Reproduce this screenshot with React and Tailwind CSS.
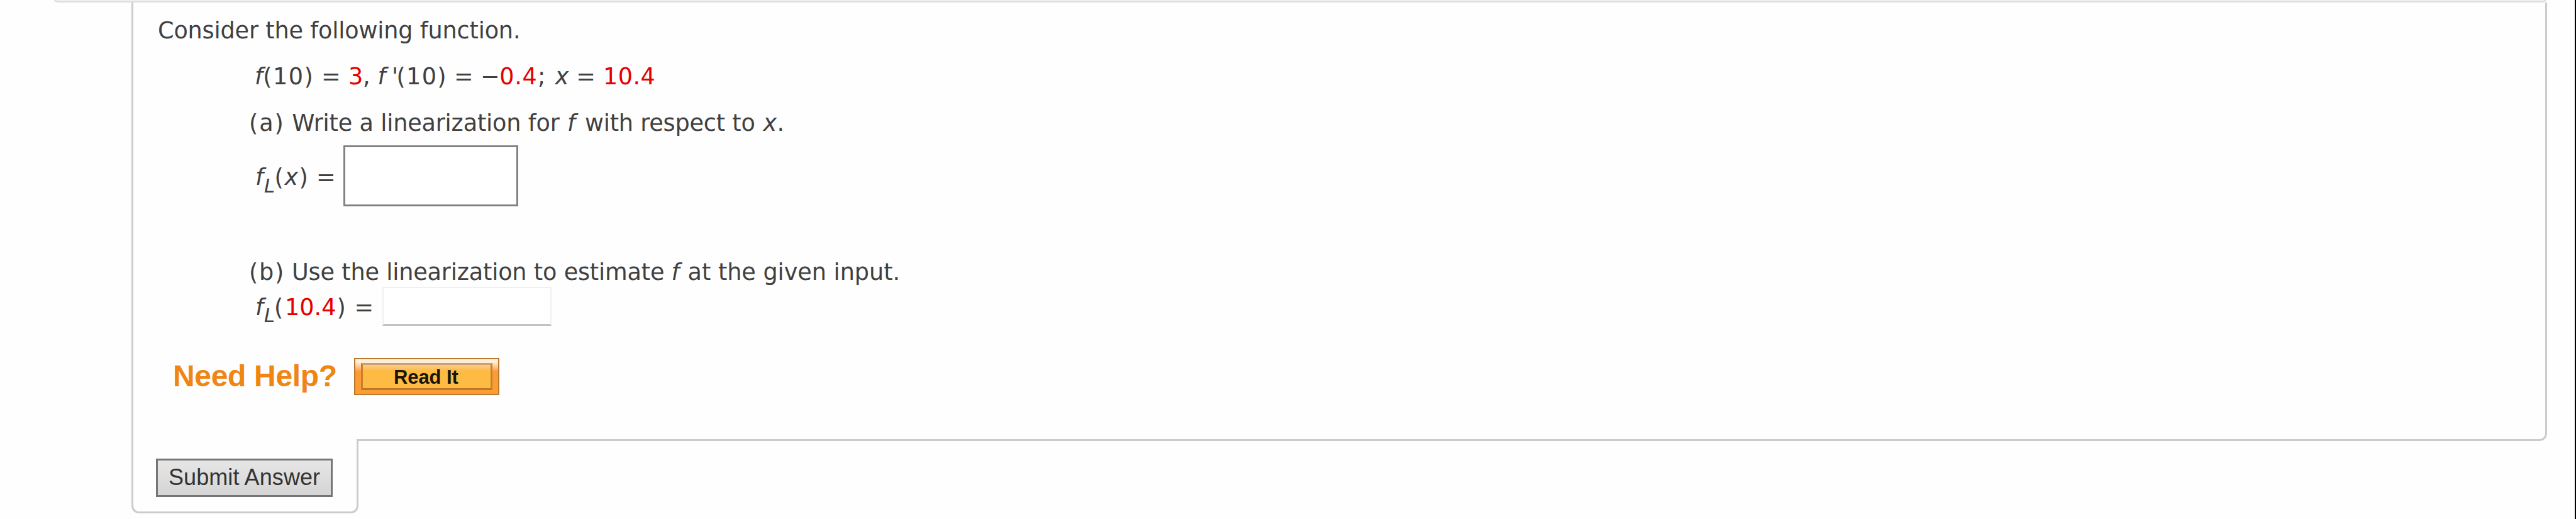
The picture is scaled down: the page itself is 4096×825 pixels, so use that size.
const Seg = ({ className = "", children }) => (
  <span className={`block shrink-0 whitespace-pre ${className}`}>{children}</span>
);

export default function App() {
  return (
    <div className="flex h-[825px] w-full flex-col overflow-hidden border-r-2 border-black bg-[#fefefe] font-['DejaVu_Sans',Verdana,sans-serif] text-[36.6px] leading-[49px] text-[#404040]">
      <div className="ml-[85px] flex h-1 w-[3965px] shrink-0 items-end overflow-hidden">
        <div className="h-5 w-full shrink-0 rounded-b-[7px] border-[3px] border-[#dfdfdf] bg-[#f5f5f5]" />
      </div>

      <main className="ml-[209px] h-[697px] w-[3841px] shrink-0 rounded-br-[12px] border-x-[3px] border-b-[3px] border-[#cccccc]">
        <p className="ml-[39px] mt-5 h-[49px] tracking-[-0.16px]">Consider the following function.</p>

        <div className="ml-[193px] mt-6 flex h-[49px]">
          <Seg className="w-[13.3px] italic">f</Seg>
          <Seg className="w-[92.7px] tracking-[1.5px]">(10)</Seg>
          <Seg className="w-[43px]">=</Seg>
          <Seg className="w-[23px] text-[#e60000]">3</Seg>
          <Seg className="w-[23.5px]">,</Seg>
          <Seg className="w-[22.5px] italic">f</Seg>
          <Seg className="w-[7.5px] italic">'</Seg>
          <Seg className="w-[91.5px] tracking-[1.3px]">(10)</Seg>
          <Seg className="w-[42px]">=</Seg>
          <Seg className="w-[30.3px]">−</Seg>
          <Seg className="w-[60.7px] tracking-[0.6px] text-[#e60000]">0.4</Seg>
          <Seg className="w-[27.8px]">;</Seg>
          <Seg className="w-[33.6px] italic">x</Seg>
          <Seg className="w-[42.6px]">=</Seg>
          <Seg className="tracking-[0.45px] text-[#e60000]">10.4</Seg>
        </div>

        <div className="ml-[184px] mt-[25px] flex h-[49px]">
          <Seg className="w-[68.3px] tracking-[1.9px]">(a)</Seg>
          <Seg className="w-[437.7px] tracking-[-0.17px]">Write a linearization for</Seg>
          <Seg className="w-[28px] italic">f</Seg>
          <Seg className="w-[283.4px] tracking-[-0.19px]">with respect to</Seg>
          <Seg className="w-[22.1px] italic">x</Seg>
          <Seg>.</Seg>
        </div>

        <div className="ml-[194px] mt-[11px] flex h-[97px] items-start">
          <div className="flex w-[140px] shrink-0 pt-[26px]">
            <Seg className="w-[14px] italic">f</Seg>
            <Seg className="w-[16.6px] pt-[14px] text-[30.5px] italic">L</Seg>
            <Seg className="w-[16px]">(</Seg>
            <Seg className="w-[22.9px] italic">x</Seg>
            <Seg className="w-[27.5px]">)</Seg>
            <Seg>=</Seg>
          </div>
          <div className="h-[97px] w-[278px] shrink-0 border-[3px] border-[#828282] bg-white" />
        </div>

        <div className="ml-[184px] mt-20 flex h-12">
          <Seg className="w-[68px] tracking-[1.7px]">(b)</Seg>
          <Seg className="w-[603.5px] tracking-[-0.17px]">Use the linearization to estimate</Seg>
          <Seg className="w-[26.1px] italic">f</Seg>
          <Seg className="tracking-[-0.03px]">at the given input.</Seg>
        </div>

        <div className="ml-[194px] flex h-[62px] items-start">
          <div className="flex w-[202px] shrink-0 pt-2">
            <Seg className="w-[14px] italic">f</Seg>
            <Seg className="w-[16px] pt-[13px] text-[30.5px] italic">L</Seg>
            <Seg className="w-[17px]">(</Seg>
            <Seg className="w-[82.6px] text-[#e60000]">10.4</Seg>
            <Seg className="w-[27.9px]">)</Seg>
            <Seg>=</Seg>
          </div>
          <div className="h-[62px] w-[269px] shrink-0 border-x-2 border-t-2 border-b-[3px] border-x-[#f0f0f0] border-t-[#f0f0f0] border-b-[#c2c2c2] bg-white" />
        </div>

        <div className="ml-[63px] mt-[51px] flex h-[59px] font-['Liberation_Sans',Arial,sans-serif] font-bold">
          <span className="block w-[288px] shrink-0 whitespace-pre pt-1 text-[48px] leading-[49px] tracking-[-0.33px] text-[#f08512]">Need Help?</span>
          <button className="h-[59px] w-[231px] shrink-0 border-2 border-[#b87830] bg-linear-to-b from-[#ffeeda] from-8% via-[#fb9d32] via-35% to-[#fb9d32] px-[9px] py-[6px]">
            <span className="block h-[43px] border-[3px] border-x-[#c88030] border-t-[#c8a078] border-b-[#c07826] bg-linear-to-b from-[#fdcc84] via-[#fdbb44] via-25% to-[#fdbb44] pl-[49px] text-left text-[31px] leading-[40px] tracking-[-0.1px] text-[#1a1405]">Read It</span>
          </button>
        </div>
      </main>

      <footer className="-mt-[3px] ml-[209px] h-[118px] w-[361px] shrink-0 rounded-b-[12px] border-x-[3px] border-b-[3px] border-[#cccccc] bg-[#fefefe] pl-9 pt-[31px]">
        <button className="block h-[61px] w-[281px] border-[3px] border-[#767676] bg-linear-to-b from-[#e6e6e6] to-[#d5d5d5] pb-0.5 pl-[17px] text-left font-['Liberation_Sans',Arial,sans-serif] text-[36px] leading-[52px] tracking-[0.08px] text-[#333333]">
          Submit Answer
        </button>
      </footer>
    </div>
  );
}
